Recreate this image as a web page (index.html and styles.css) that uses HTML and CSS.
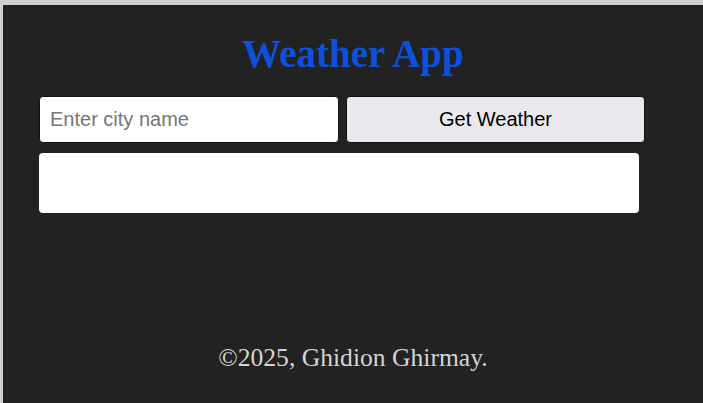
FILE: index.html
```html
<!DOCTYPE html>
<html lang="en">
<head>
<meta charset="utf-8">
<title>Weather App</title>
<link rel="stylesheet" href="styles.css">
</head>
<body>
<div class="page">
  <h1 class="title">Weather App</h1>
  <div class="search-row">
    <input class="city-input" type="text" placeholder="Enter city name">
    <button class="get-btn" type="button">Get Weather</button>
  </div>
  <div class="result"></div>
  <footer class="footer">©2025, Ghidion Ghirmay.</footer>
</div>
</body>
</html>
```
FILE: styles.css
```css
html, body {
  margin: 0;
  padding: 0;
  background: #cfcfcf;
  overflow: hidden;
}
.page {
  margin: 5px 0 0 3px;
  height: 398px;
  background: #222222;
  padding: 27px 36px 0 36px;
  box-sizing: border-box;
  display: flex;
  flex-direction: column;
}
.title {
  margin: 0;
  font-family: "Liberation Serif", "Times New Roman", serif;
  font-weight: bold;
  font-size: 39px;
  line-height: 44px;
  color: #0c50dc;
  text-align: center;
}
.search-row {
  margin-top: 20px;
  display: flex;
  gap: 7px;
  width: 606px;
}
.city-input {
  width: 300px;
  height: 47px;
  box-sizing: border-box;
  border: 1px solid #111;
  border-radius: 4px;
  background: #fff;
  padding: 0 10px;
  font-family: "Liberation Sans", Arial, sans-serif;
  font-size: 20px;
  color: #000;
  outline: none;
}
.city-input::placeholder {
  color: #767676;
}
.get-btn {
  width: 299px;
  height: 47px;
  box-sizing: border-box;
  border: 1px solid #111;
  border-radius: 4px;
  background: #e9e8ed;
  font-family: "Liberation Sans", Arial, sans-serif;
  font-size: 20px;
  color: #000;
  padding: 0;
}
.result {
  margin-top: 10px;
  width: 600px;
  height: 60px;
  background: #fff;
  border-radius: 4px;
}
.footer {
  margin-top: 130px;
  font-family: "Liberation Serif", "Times New Roman", serif;
  font-size: 25.6px;
  line-height: 30px;
  color: #d4d4d4;
  text-align: center;
}
```
